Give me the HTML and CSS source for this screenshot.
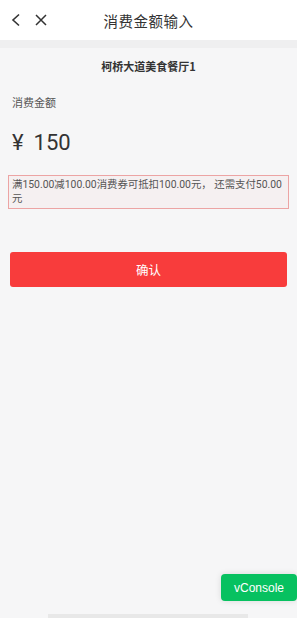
FILE: index.html
```html
<!DOCTYPE html>
<html lang="zh">
<head>
<meta charset="utf-8">
<title>消费金额输入</title>
<link rel="stylesheet" href="styles.css">
</head>
<body>
<div class="page">
  <header class="nav">
    <div class="nav-icons">
      <svg class="ico" width="12" height="14" viewBox="0 0 12 14"><path d="M9 1.5 L3 7 L9 12.5" fill="none" stroke="#333" stroke-width="1.6"/></svg>
      <svg class="ico" width="14" height="14" viewBox="0 0 14 14"><path d="M2 2 L12 12 M12 2 L2 12" fill="none" stroke="#333" stroke-width="1.5"/></svg>
    </div>
    <div class="nav-title">消费金额输入</div>
  </header>
  <div class="divider"></div>
  <main class="content">
    <div class="store">柯桥大道美食餐厅1</div>
    <div class="label">消费金额</div>
    <div class="amount"><span class="yen">¥</span><span>150</span></div>
    <div class="notice">满150.00减100.00消费券可抵扣100.00元， 还需支付50.00元</div>
    <button class="confirm">确认</button>
  </main>
  <div class="vconsole">vConsole</div>
  <div class="home-bar"></div>
</div>
</body>
</html>
```
FILE: styles.css
```css
* { box-sizing: border-box; }
html, body { margin: 0; padding: 0; }
body {
  width: 297px;
  height: 618px;
  overflow: hidden;
  background: #f6f6f7;
  font-family: "Noto Sans CJK SC", "Noto Sans", sans-serif;
  color: #333;
}
.page { position: relative; height: 618px; }
.nav {
  position: relative;
  height: 40px;
  background: #fff;
  display: flex;
  align-items: center;
  justify-content: center;
}
.nav-icons {
  position: absolute;
  left: 10px;
  top: 13px;
  display: flex;
  gap: 12px;
  align-items: center;
}
.ico { display: block; }
.nav-title { font-size: 14.5px; color: #333; letter-spacing: 0.5px; }
.divider { height: 8px; background: #efeff0; }
.content {
  display: flex;
  flex-direction: column;
  padding: 0 8px;
}
.store {
  text-align: center;
  font-size: 11px;
  font-weight: 700;
  color: #333;
  margin-top: 10px;
  line-height: 16px;
}
.label {
  font-size: 11px;
  color: #555;
  margin: 20px 0 0 4px;
  line-height: 16px;
}
.amount {
  margin: 19px 0 0 4px;
  font-family: Roboto, "Noto Sans", sans-serif;
  font-size: 22px;
  color: #333;
  line-height: 28px;
  display: flex;
  gap: 10px;
}
.notice {
  margin-top: 18px;
  border: 1px solid #eca4a4;
  background: #f5f0f1;
  color: #555;
  font-family: Roboto, "Noto Sans CJK SC", sans-serif;
  font-size: 10.4px;
  line-height: 14px;
  padding: 2px 3px 2px 3px;
  word-break: break-all;
}
.confirm {
  margin: 43px 2px 0 2px;
  height: 35px;
  border: none;
  border-radius: 3px;
  background: #f83c3c;
  color: #fff;
  font-family: "Noto Sans CJK SC", sans-serif;
  font-size: 12.5px;
}
.vconsole {
  position: absolute;
  right: 0;
  top: 574px;
  width: 76px;
  height: 27px;
  background: #07c160;
  border-radius: 4px;
  color: #fff;
  font-family: "Liberation Sans", Arial, sans-serif;
  font-size: 12px;
  display: flex;
  align-items: center;
  justify-content: center;
  box-shadow: 0 0 6px rgba(0,0,0,0.12);
}
.home-bar {
  position: absolute;
  left: 48px;
  width: 200px;
  top: 614px;
  height: 4px;
  background: #e8e8e8;
}
```
